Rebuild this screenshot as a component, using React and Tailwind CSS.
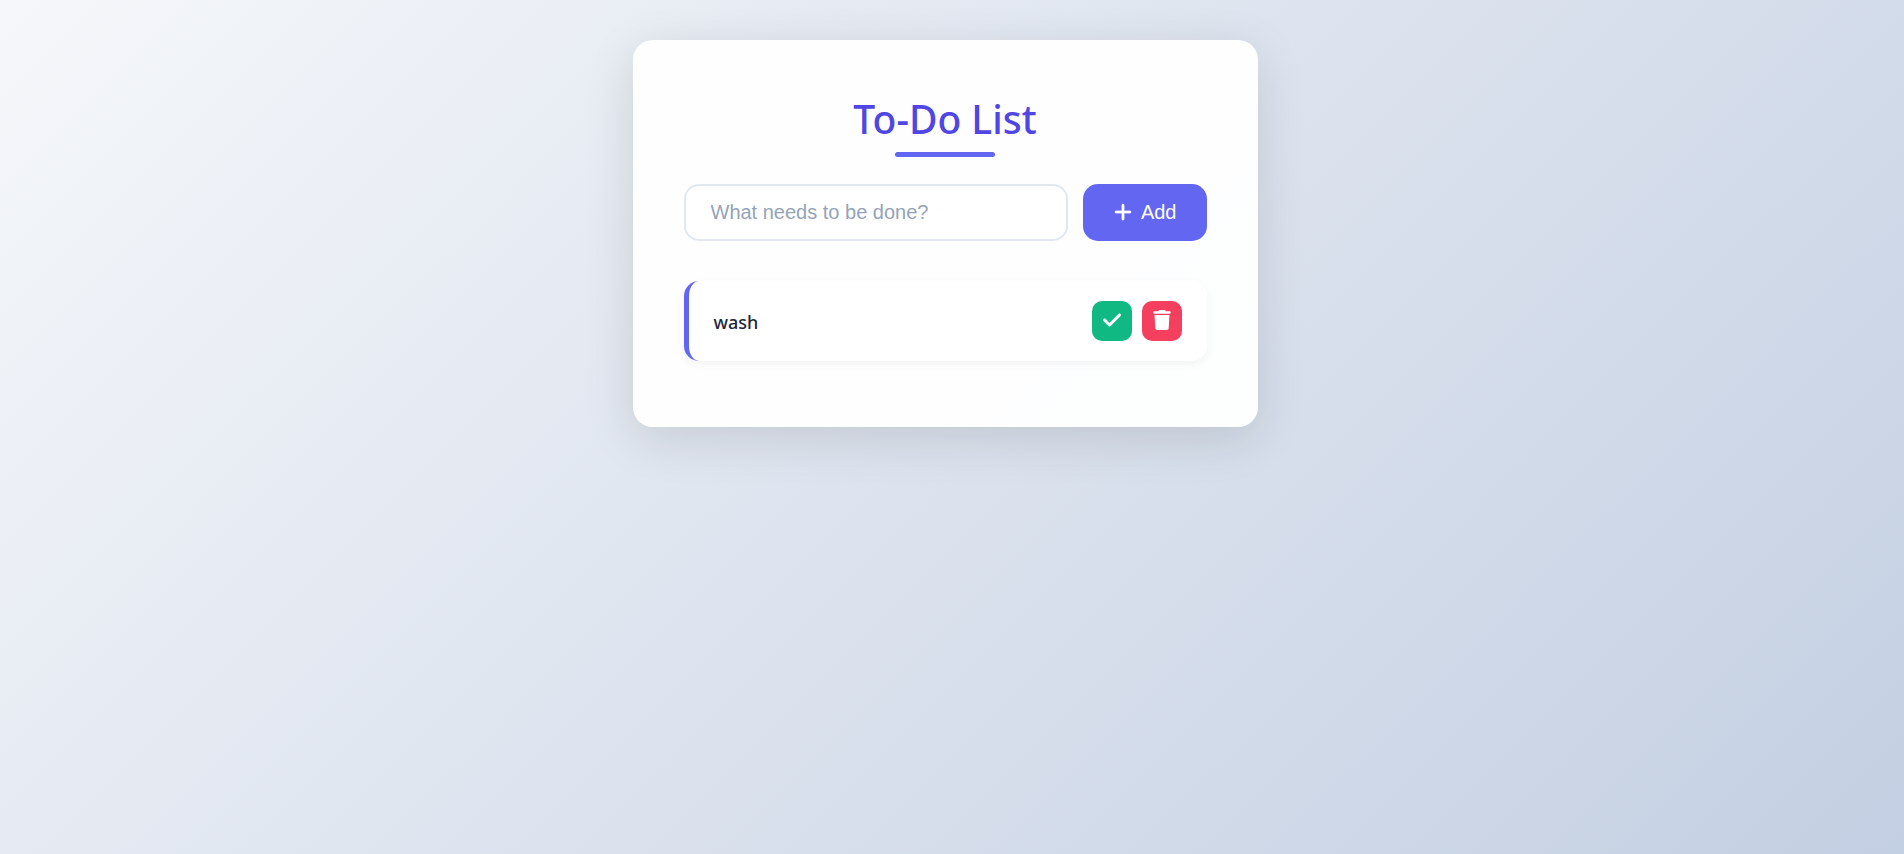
import { useState } from "react";
import { FaCheck, FaPlus, FaTrash } from "react-icons/fa6";

function TodoItem({ text, onDone, onRemove, done }) {
  return (
    <li className="flex items-center justify-between gap-4 rounded-[15px] border-l-5 border-[#6366f1] bg-white px-[25px] py-5 shadow-[0_3px_10px_rgba(0,0,0,0.05)]">
      <span
        className={
          done
            ? "pt-0.5 text-lg leading-7 font-medium text-[#94a3b8] line-through"
            : "pt-0.5 text-lg leading-7 font-medium text-[#1e293b]"
        }
      >
        {text}
      </span>
      <div className="flex gap-2.5">
        <button
          type="button"
          aria-label="Complete task"
          onClick={onDone}
          className="flex h-10 w-10 justify-center rounded-[10px] bg-[#10b981] pt-[9px] text-xl text-white"
        >
          <FaCheck className="stroke-white stroke-[14px]" />
        </button>
        <button
          type="button"
          aria-label="Delete task"
          onClick={onRemove}
          className="flex h-10 w-10 justify-center rounded-[10px] bg-[#f43f5e] pt-[9px] text-xl text-white"
        >
          <FaTrash />
        </button>
      </div>
    </li>
  );
}

export default function App() {
  const [todos, setTodos] = useState([{ id: 1, text: "wash", done: false }]);
  const [draft, setDraft] = useState("");

  const addTodo = (event) => {
    event.preventDefault();
    const text = draft.trim();
    if (!text) return;
    setTodos([...todos, { id: Date.now(), text, done: false }]);
    setDraft("");
  };

  const toggle = (id) =>
    setTodos(todos.map((t) => (t.id === id ? { ...t, done: !t.done } : t)));
  const remove = (id) => setTodos(todos.filter((t) => t.id !== id));

  return (
    <div className="flex min-h-screen items-start justify-center bg-[linear-gradient(135deg,#f5f7fa_0%,#c3cfe2_100%)] py-10 pr-[14px] font-['Noto_Sans','Open_Sans',sans-serif]">
      <main className="w-full max-w-[625px] rounded-[20px] border border-white/20 bg-white/95 p-[50px] shadow-[0_12px_50px_rgba(0,0,0,0.12)]">
        <header className="mb-[27px] flex flex-col items-center gap-[5px]">
          <h1 className="text-[39px] leading-[56px] font-medium text-[#4f46e5]">
            To-Do List
          </h1>
          <div className="h-[5px] w-[100px] rounded-[3px] bg-[#6366f1]" />
        </header>

        <form onSubmit={addTodo} className="mb-10 flex gap-[15px]">
          <input
            type="text"
            aria-label="New task"
            placeholder="What needs to be done?"
            value={draft}
            onChange={(e) => setDraft(e.target.value)}
            className="h-[57px] min-w-0 flex-1 rounded-[15px] border-2 border-[#e2e8f0] bg-white px-[25px] font-['Liberation_Sans',Arial,sans-serif] text-xl text-[#1e293b] outline-none placeholder:text-[#94a3b8]"
          />
          <button
            type="submit"
            className="flex items-center gap-2 rounded-[15px] bg-[#6366f1] px-[30px] pb-0.5 font-['Liberation_Sans',Arial,sans-serif] text-xl text-white"
          >
            <FaPlus className="overflow-visible stroke-white stroke-[6px]" />
            Add
          </button>
        </form>

        <ul className="mb-[15px] flex flex-col gap-[15px]">
          {todos.map((todo) => (
            <TodoItem
              key={todo.id}
              text={todo.text}
              done={todo.done}
              onDone={() => toggle(todo.id)}
              onRemove={() => remove(todo.id)}
            />
          ))}
        </ul>
      </main>
    </div>
  );
}
